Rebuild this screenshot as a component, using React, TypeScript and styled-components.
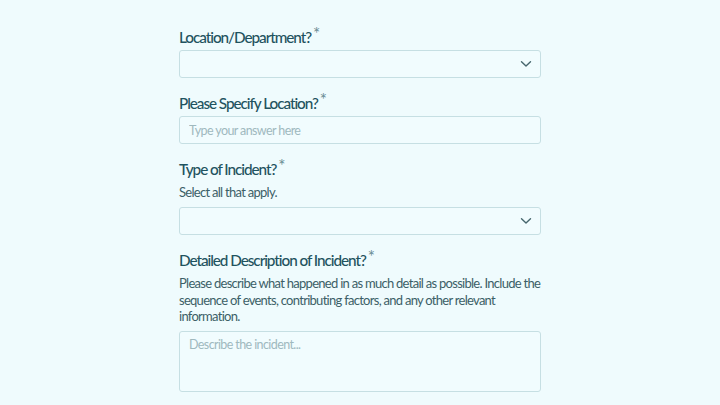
import React from "react";
import styled, { createGlobalStyle } from "styled-components";

const Global = createGlobalStyle`
  html, body { margin: 0; padding: 0; background: #effbfd; }
  body { font-family: Lato, "Noto Sans", sans-serif; }
  * { box-sizing: border-box; }
`;

const Page = styled.div`
  min-height: 405px;
  background: #effbfd;
  display: flex;
  justify-content: center;
  padding-top: 27px;
`;

const Form = styled.form`
  width: 362px;
  display: flex;
  flex-direction: column;
  gap: 15px;
`;

const Field = styled.div`
  display: flex;
  flex-direction: column;
`;

const Label = styled.label`
  display: block;
  font-size: 15.3px;
  line-height: 20px;
  height: 20px;
  font-weight: 500;
  letter-spacing: -1.05px;
  color: #1f5360;
  margin-bottom: 3px;
`;

const Star = styled.span`
  font-size: 17px;
  line-height: 0;
  color: #6a8b93;
  vertical-align: 3px;
  margin-left: 2px;
  font-weight: 400;
  letter-spacing: 0;
`;

const Help = styled.p`
  margin: 2px 0 6.5px;
  font-size: 13px;
  line-height: 16.5px;
  letter-spacing: -0.72px;
  color: #3c5f67;
`;

const boxBase = `
  width: 100%;
  border: 1px solid #c6dfe3;
  border-radius: 3px;
  background: #f1fcfe;
  font-family: Lato, "Noto Sans", sans-serif;
  font-size: 12.5px;
  letter-spacing: -0.6px;
  color: #1e4f59;
  outline: none;
`;

const SelectBox = styled.div`
  ${boxBase}
  height: 28px;
  display: flex;
  align-items: center;
  justify-content: flex-end;
  padding: 0 8px 0 9px;
`;

const TextInput = styled.input`
  ${boxBase}
  height: 28px;
  padding: 0 9px;
  &::placeholder { color: #9fb9be; }
`;

const TextArea = styled.textarea`
  ${boxBase}
  height: 61px;
  padding: 5px 9px;
  resize: none;
  &::placeholder { color: #9fb9be; }
`;

const Chevron = () => (
  <svg width="12" height="8" viewBox="0 0 12 8" fill="none">
    <path d="M1.5 1.8 L6 6 L10.5 1.8" stroke="#46666d" strokeWidth="1.4" strokeLinecap="round" strokeLinejoin="round" />
  </svg>
);

export default function App() {
  return (
    <>
      <Global />
      <Page>
        <Form>
          <Field>
            <Label>Location/Department?<Star>*</Star></Label>
            <SelectBox><Chevron /></SelectBox>
          </Field>
          <Field>
            <Label>Please Specify Location?<Star>*</Star></Label>
            <TextInput placeholder="Type your answer here" />
          </Field>
          <Field>
            <Label>Type of Incident?<Star>*</Star></Label>
            <Help>Select all that apply.</Help>
            <SelectBox><Chevron /></SelectBox>
          </Field>
          <Field>
            <Label>Detailed Description of Incident?<Star>*</Star></Label>
            <Help>
              Please describe what happened in as much detail as possible. Include the sequence of events, contributing factors, and any other relevant information.
            </Help>
            <TextArea placeholder="Describe the incident..." />
          </Field>
        </Form>
      </Page>
    </>
  );
}
